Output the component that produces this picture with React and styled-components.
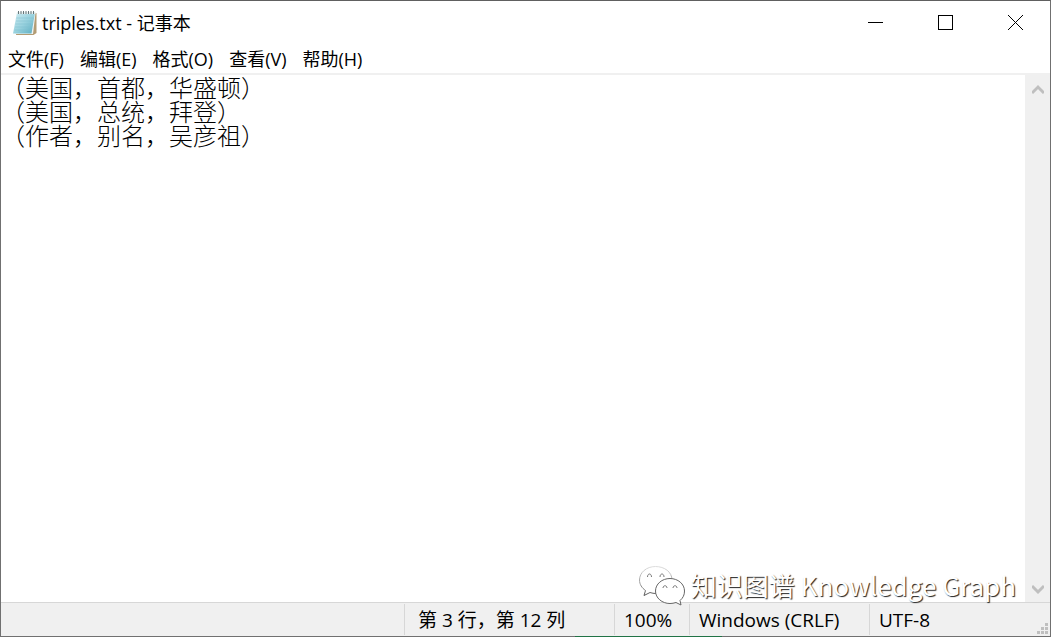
import React from 'react'
import styled, { createGlobalStyle } from 'styled-components'

const GlobalStyle = createGlobalStyle`
  * {
    box-sizing: border-box;
  }
  body {
    margin: 0;
    background: #fff;
    color: #000;
    font-family: "Open Sans", "Noto Sans CJK SC", sans-serif;
    font-size: 18px;
  }
  button, textarea {
    font: inherit;
    color: inherit;
  }
`

const Window = styled.div`
  display: flex;
  flex-direction: column;
  height: 100vh;
  border: 1px solid #707070;
  border-top-color: #606060;
  background: #fff;
`

const TitleBar = styled.header`
  display: flex;
  align-items: center;
  height: 43px;
  padding-left: 11px;
`

const Title = styled.h1`
  flex: 1;
  margin: 0 0 0 4px;
  font-size: 18px;
  font-weight: 400;
  line-height: 24px;
`

const WindowButton = styled.button`
  display: flex;
  align-items: center;
  justify-content: center;
  width: 70px;
  height: 43px;
  padding: 0;
  border: 0;
  background: none;
`

const LineIcon = styled.svg`
  display: block;
  fill: none;
  stroke: #000;
  stroke-width: 1px;
`

const MenuBar = styled.nav`
  display: flex;
  gap: 16px;
  height: 29px;
  padding-left: 7px;
`

const MenuButton = styled.button`
  padding: 0;
  border: 0;
  background: none;
  line-height: 30px;
  white-space: nowrap;
`

const Workspace = styled.main`
  position: relative;
  display: flex;
  flex: 1;
  min-height: 0;
  border-top: 2px solid #f0f0f0;
`

const Editor = styled.textarea`
  flex: 1;
  min-width: 0;
  padding: 0;
  border: 0;
  outline: 0;
  resize: none;
  overflow: hidden;
  background: #fff;
  font-family: "Noto Sans CJK SC", monospace;
  font-size: 24px;
  font-weight: 300;
  line-height: 24px;
`

const ScrollBar = styled.div`
  display: flex;
  flex-direction: column;
  justify-content: space-between;
  width: 25px;
  padding-top: 1px;
  background: #f0f0f0;
`

const ScrollButton = styled.button`
  display: flex;
  align-items: center;
  justify-content: center;
  height: 26px;
  padding: 0;
  border: 0;
  background: none;
`

const StatusBar = styled.footer`
  position: relative;
  display: flex;
  justify-content: flex-end;
  height: 34px;
  border-top: 1px solid #d7d7d7;
  background: #f0f0f0;
  font-size: 19px;
`

const StatusCell = styled.div`
  width: ${props => props.$width}px;
  margin: 1px 0;
  padding-left: ${props => props.$inset || 9}px;
  border-left: 1px solid #d7d7d7;
  line-height: 32px;
  white-space: nowrap;
`

const Grip = styled.svg`
  position: absolute;
  right: 1px;
  bottom: 1px;
  fill: #bfbfbf;
`

const BackWindowEdge = styled.div`
  position: absolute;
  left: 574px;
  bottom: -1px;
  width: 147px;
  height: 1px;
  background: #217346;
`

const Watermark = styled.div`
  position: absolute;
  right: 34px;
  bottom: -4px;
  z-index: 1;
  display: flex;
  align-items: center;
  gap: 6px;
  color: #fff;
  font-family: "Noto Sans CJK SC", sans-serif;
  font-size: 26px;
  line-height: 42px;
  white-space: nowrap;
  text-shadow: 1px 1px 1px #222;
  pointer-events: none;
`

const menus = ['文件(F)', '编辑(E)', '格式(O)', '查看(V)', '帮助(H)']

const text = '（美国，首都，华盛顿）\n（美国，总统，拜登）\n（作者，别名，吴彦祖）'

const NotepadIcon = () => (
  <svg width="26" height="26" viewBox="0 0 26 26" aria-hidden="true">
    <defs>
      <linearGradient id="page" x1="0" y1="0" x2="1" y2="1">
        <stop offset="0" stopColor="#d3edf3" />
        <stop offset="0.5" stopColor="#9bd3df" />
        <stop offset="1" stopColor="#5aacc0" />
      </linearGradient>
    </defs>
    <path d="M7 3h17.500v20l-3 2H4z" fill="#b39c74" />
    <path d="M6 3h17.500l-2.500 21H3z" fill="#edf3f3" />
    <path d="M5 2.500h18L19.500 23.500H1z" fill="url(#page)" />
    <path d="M4.500 8h17M4 11h17M3.500 14h17M3 17h17M2.500 20h17" stroke="#7dbdcd" strokeWidth=".5" />
    <path d="M5 3h18.500" stroke="#e5eeee" strokeWidth="2" />
    <path d="M6.500 1v3M9 1v3M11.500 1v3M14 1v3M16.500 1v3M19 1v3M21.500 1v3" stroke="#66767a" />
  </svg>
)

const WechatIcon = () => (
  <svg width="47" height="42" viewBox="0 0 47 42" fill="none" stroke="#777" aria-hidden="true">
    <defs>
      <linearGradient id="bubble" x1="0" y1="0" x2="0" y2="1">
        <stop offset="0" stopColor="#ddd" />
        <stop offset="0.6" stopColor="#999" />
        <stop offset="1" stopColor="#555" />
      </linearGradient>
    </defs>
    <path
      d="M17.500 2.500C8.500 2.500 1.500 8.500 1.500 16c0 4.500 2.500 8 6 10.500l-1.500 5 6-3c2 .7 4 1 6 1C27 29.500 34 24 34 16S26.500 2.500 17.500 2.500z"
      fill="#fff"
      stroke="url(#bubble)"
    />
    <path
      d="M33 14.500c-8 0-14.500 5.500-14.500 12.500S25 39.500 33 39.500c2 0 4-.4 6-1l5 2.500-1-4.500c3-2.500 4.500-5.500 4.500-9.500 0-7-6.500-12.500-14.500-12.500z"
      transform="translate(-1 0)"
      fill="#fff"
      stroke="#666"
    />
    <path d="M9.500 13c0-4 4-4 4 0M22 13c0-4 4-4 4 0M25 24c0-3 4-3 4 0M35 24c0-3 4-3 4 0" />
  </svg>
)

const ScrollArrow = ({ points }) => (
  <svg width="12" height="11" viewBox="0 0 12 11" fill="none" stroke="#bfbfbf" strokeWidth="3" aria-hidden="true">
    <polyline points={points} />
  </svg>
)

const App = () => (
  <>
    <GlobalStyle />
    <Window>
      <TitleBar>
        <NotepadIcon />
        <Title>triples.txt - 记事本</Title>
        <WindowButton aria-label="最小化">
          <LineIcon width="15" height="15" viewBox="0 0 15 15"><path d="M0 7.500h15" /></LineIcon>
        </WindowButton>
        <WindowButton aria-label="最大化">
          <LineIcon width="15" height="15" viewBox="0 0 15 15"><rect x=".5" y=".5" width="14" height="14" /></LineIcon>
        </WindowButton>
        <WindowButton aria-label="关闭">
          <LineIcon width="15" height="15" viewBox="0 0 15 15"><path d="M0 0l15 15M15 0L0 15" /></LineIcon>
        </WindowButton>
      </TitleBar>
      <MenuBar>
        {menus.map(menu => <MenuButton key={menu}>{menu}</MenuButton>)}
      </MenuBar>
      <Workspace>
        <Editor aria-label="文本编辑器" spellCheck={false} defaultValue={text} />
        <ScrollBar>
          <ScrollButton aria-label="向上滚动"><ScrollArrow points="0,9 6,3 12,9" /></ScrollButton>
          <ScrollButton aria-label="向下滚动"><ScrollArrow points="0,2 6,8 12,2" /></ScrollButton>
        </ScrollBar>
        <Watermark>
          <WechatIcon />
          <span>知识图谱 Knowledge Graph</span>
        </Watermark>
      </Workspace>
      <StatusBar>
        <StatusCell $width={210} $inset={13}>第 3 行，第 12 列</StatusCell>
        <StatusCell $width={75}>100%</StatusCell>
        <StatusCell $width={180}>Windows (CRLF)</StatusCell>
        <StatusCell $width={181}>UTF-8</StatusCell>
        <Grip width="12" height="12" viewBox="0 0 12 12" aria-hidden="true">
          <path d="M8 0h3v3H8zM4 4h3v3H4zM8 4h3v3H8zM0 8h3v3H0zM4 8h3v3H4zM8 8h3v3H8z" />
        </Grip>
        <BackWindowEdge />
      </StatusBar>
    </Window>
  </>
)

export default App
